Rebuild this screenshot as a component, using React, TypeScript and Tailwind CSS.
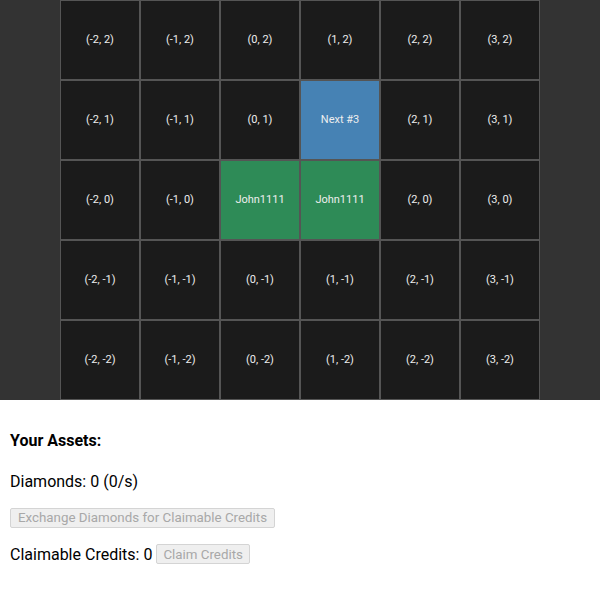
import React from 'react';

type Cell = { x: number; y: number };

const owners: Record<string, { label: string; bg: string }> = {
  '0,0': { label: 'John1111', bg: 'bg-[#2e8b57]' },
  '1,0': { label: 'John1111', bg: 'bg-[#2e8b57]' },
  '1,1': { label: 'Next #3', bg: 'bg-[#4682b4]' },
};

const rows = [2, 1, 0, -1, -2];
const cols = [-2, -1, 0, 1, 2, 3];

const cells: Cell[] = rows.flatMap((y) => cols.map((x) => ({ x, y })));

const App: React.FC = () => {
  return (
    <div className="min-h-[600px] bg-white" style={{ fontFamily: 'Roboto, "Liberation Sans", sans-serif' }}>
      <div className="h-[400px] bg-[#333333] flex justify-center">
        <div className="grid grid-cols-[repeat(6,80px)] grid-rows-[repeat(5,80px)]">
          {cells.map((c) => {
            const owner = owners[`${c.x},${c.y}`];
            return (
              <div
                key={`${c.x},${c.y}`}
                className={`box-border border border-[#555555] flex items-center justify-center text-[11px] text-[#eeeeee] ${
                  owner ? owner.bg : 'bg-[#1b1b1b]'
                }`}
              >
                {owner ? owner.label : `(${c.x}, ${c.y})`}
              </div>
            );
          })}
        </div>
      </div>

      <div className="px-[10px] pt-[31px] text-black">
        <h3 className="text-[16px] font-bold leading-[19px]">Your Assets:</h3>
        <p className="mt-[22px] text-[16px] leading-[19px]">Diamonds: 0 (0/s)</p>
        <button
          disabled
          className="mt-[17px] h-[20px] px-[7px] text-[13.33px] leading-none text-[#a8a8a8] bg-[#efefef] border border-[#d4d4d4] rounded-[2px]"
        >
          Exchange Diamonds for Claimable Credits
        </button>
        <div className="mt-[15px] flex items-center gap-[4px]">
          <span className="text-[16px] leading-[19px]">Claimable Credits: 0</span>
          <button
            disabled
            className="h-[20px] px-[6px] text-[13.33px] leading-none text-[#a8a8a8] bg-[#efefef] border border-[#d4d4d4] rounded-[2px]"
          >
            Claim Credits
          </button>
        </div>
      </div>
    </div>
  );
};

export default App;
